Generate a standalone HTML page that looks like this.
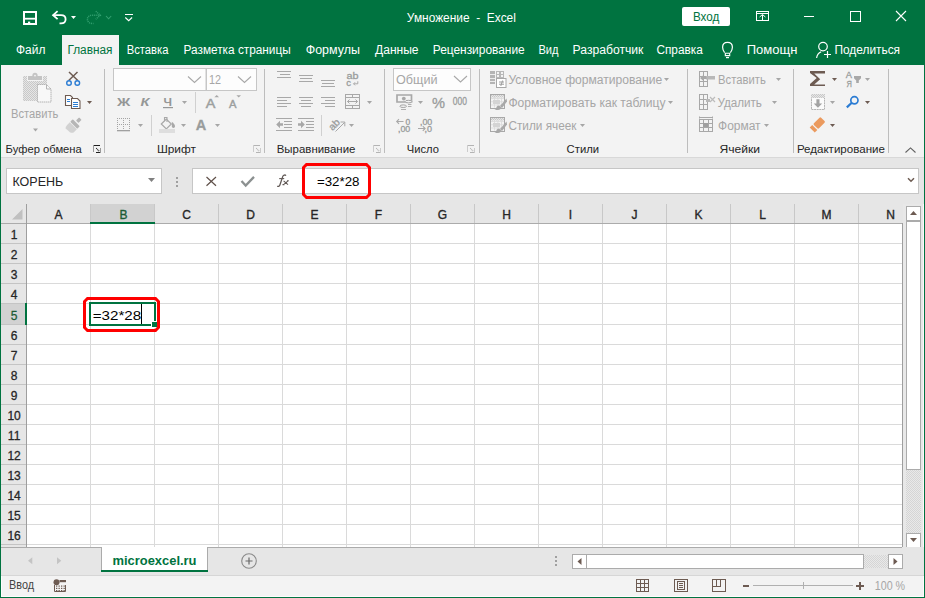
<!DOCTYPE html>
<html><head><meta charset="utf-8">
<style>html,body{margin:0;padding:0;width:925px;height:598px;overflow:hidden;background:#007340}svg{display:block}</style>
</head><body><svg width="925" height="598" viewBox="0 0 925 598" font-family="Liberation Sans, sans-serif"><rect x="0" y="0" width="925" height="598" fill="#007340" />
<path d="M24 12h12v12h-12z" fill="none" stroke="#fff" stroke-width="2" />
<rect x="25" y="17.8" width="10" height="1.8" fill="#fff" />
<rect x="28" y="21.6" width="2.2" height="2.6" fill="#fff" />
<path d="M52.8 15.2H61c2.8 0 4.6 1.8 4.6 4.1s-1.8 4.1-4.6 4.1h-1.5" fill="none" stroke="#fff" stroke-width="1.8" />
<path d="M57.6 11.2l-4.5 4l4.5 4" fill="none" stroke="#fff" stroke-width="1.8" />
<path d="M71 16h5l-2.5 3z" fill="#fff" />
<path d="M100.5 15.2H92c-2.8 0-4.6 1.8-4.6 4.1s1.8 4.1 4.6 4.1h1.5" fill="none" stroke="#33a070" stroke-width="1.5" stroke-dasharray="1 0.9"/>
<path d="M95.8 11.2l4.5 4l-4.5 4" fill="none" stroke="#33a070" stroke-width="1.5" stroke-dasharray="1 0.9"/>
<path d="M106 16l2.6 2.8l2.6-2.8" fill="none" stroke="#33a070" stroke-width="1.1" />
<rect x="125" y="14" width="8" height="1" fill="#fff" />
<path d="M125.3 17.5l3.4 3.2l3.4-3.2" fill="none" stroke="#fff" stroke-width="1.1" />
<text x="406.86" y="22" font-size="12" font-weight="400" fill="#fff" textLength="109.04" lengthAdjust="spacingAndGlyphs" xml:space="preserve">Умножение  -  Excel</text>
<rect x="682" y="7" width="48" height="19" rx="2" fill="#fff"/>
<text x="692.94" y="21" font-size="12" font-weight="400" fill="#007340" textLength="26.36" lengthAdjust="spacingAndGlyphs" xml:space="preserve">Вход</text>
<path d="M756.5 11.5h12v9h-12zM756.5 13.5h12" fill="none" stroke="#fff" stroke-width="1" shape-rendering="crispEdges"/>
<rect x="762" y="15" width="1" height="6" fill="#fff" />
<path d="M759.6 17l2.9-2.5l2.9 2.5" fill="none" stroke="#fff" stroke-width="1" />
<rect x="804" y="16" width="10" height="1" fill="#fff" />
<path d="M850.5 11.5h10v9.5h-10z" fill="none" stroke="#fff" stroke-width="1" shape-rendering="crispEdges"/>
<path d="M896 11L906 21M906 11L896 21" fill="none" stroke="#fff" stroke-width="1.1" />
<rect x="62" y="35" width="57" height="30" fill="#f3f3f3" />
<text x="16.04" y="54" font-size="12" font-weight="400" fill="#fff" textLength="29.32" lengthAdjust="spacingAndGlyphs" xml:space="preserve">Файл</text>
<text x="126.76" y="54" font-size="12" font-weight="400" fill="#fff" textLength="41.68" lengthAdjust="spacingAndGlyphs" xml:space="preserve">Вставка</text>
<text x="183.58" y="54" font-size="12" font-weight="400" fill="#fff" textLength="107.14" lengthAdjust="spacingAndGlyphs" xml:space="preserve">Разметка страницы</text>
<text x="305.72" y="54" font-size="12" font-weight="400" fill="#fff" textLength="54.18" lengthAdjust="spacingAndGlyphs" xml:space="preserve">Формулы</text>
<text x="375.04" y="54" font-size="12" font-weight="400" fill="#fff" textLength="43.54" lengthAdjust="spacingAndGlyphs" xml:space="preserve">Данные</text>
<text x="432.72" y="54" font-size="12" font-weight="400" fill="#fff" textLength="92.00" lengthAdjust="spacingAndGlyphs" xml:space="preserve">Рецензирование</text>
<text x="538.44" y="54" font-size="12" font-weight="400" fill="#fff" textLength="20.04" lengthAdjust="spacingAndGlyphs" xml:space="preserve">Вид</text>
<text x="572.58" y="54" font-size="12" font-weight="400" fill="#fff" textLength="70.82" lengthAdjust="spacingAndGlyphs" xml:space="preserve">Разработчик</text>
<text x="656.40" y="54" font-size="12" font-weight="400" fill="#fff" textLength="46.36" lengthAdjust="spacingAndGlyphs" xml:space="preserve">Справка</text>
<text x="746.72" y="54" font-size="12" font-weight="400" fill="#fff" textLength="50.64" lengthAdjust="spacingAndGlyphs" xml:space="preserve">Помощн</text>
<text x="834.44" y="54" font-size="12" font-weight="400" fill="#fff" textLength="65.60" lengthAdjust="spacingAndGlyphs" xml:space="preserve">Поделиться</text>
<text x="67.44" y="54" font-size="12" font-weight="400" fill="#007340" textLength="45.06" lengthAdjust="spacingAndGlyphs" xml:space="preserve">Главная</text>
<path d="M724.6 52.6C723.4 51 722.6 49.6 722.6 47.3C722.6 44.2 724.8 42.4 727.5 42.4C730.2 42.4 732.4 44.2 732.4 47.3C732.4 49.6 731.6 51 730.4 52.6" fill="none" stroke="#fff" stroke-width="1.2" />
<path d="M725.3 53.2h4.4v2.4h-4.4z" fill="none" stroke="#fff" stroke-width="1.1" />
<rect x="726" y="57" width="3" height="1.2" fill="#fff" />
<circle cx="823" cy="46.6" r="4.3" fill="none" stroke="#fff" stroke-width="1.2"/>
<path d="M816.6 58c0.4-3 2-5.2 4.6-6.3" fill="none" stroke="#fff" stroke-width="1.2" />
<path d="M824 54.5h7M827.5 51v7" fill="none" stroke="#fff" stroke-width="1.2" />
<rect x="1" y="65" width="923" height="92" fill="#f3f3f3" />
<rect x="1" y="157" width="923" height="1" fill="#d8d8d8" />
<rect x="104" y="69" width="1" height="84" fill="#bdbdbd" />
<rect x="264" y="69" width="1" height="84" fill="#bdbdbd" />
<rect x="384" y="69" width="1" height="84" fill="#bdbdbd" />
<rect x="479" y="69" width="1" height="84" fill="#bdbdbd" />
<rect x="687" y="69" width="1" height="84" fill="#bdbdbd" />
<rect x="793" y="69" width="1" height="84" fill="#bdbdbd" />
<rect x="888" y="69" width="1" height="84" fill="#bdbdbd" />
<rect x="93" y="145" width="7" height="1" fill="#202020" />
<rect x="93" y="145" width="1" height="7" fill="#9a9a9a" />
<path d="M96.2 148.2l3.3 3.3" fill="none" stroke="#202020" stroke-width="1.1" stroke-dasharray="1 0.6"/>
<rect x="96" y="152" width="4" height="1" fill="#202020" />
<rect x="100" y="148" width="1" height="5" fill="#9a9a9a" />
<rect x="253" y="145" width="7" height="1" fill="#b4b4b4" />
<rect x="253" y="145" width="1" height="7" fill="#cccccc" />
<path d="M256.2 148.2l3.3 3.3" fill="none" stroke="#b4b4b4" stroke-width="1.1" stroke-dasharray="1 0.6"/>
<rect x="256" y="152" width="4" height="1" fill="#b4b4b4" />
<rect x="260" y="148" width="1" height="5" fill="#cccccc" />
<rect x="373" y="145" width="7" height="1" fill="#b4b4b4" />
<rect x="373" y="145" width="1" height="7" fill="#cccccc" />
<path d="M376.2 148.2l3.3 3.3" fill="none" stroke="#b4b4b4" stroke-width="1.1" stroke-dasharray="1 0.6"/>
<rect x="376" y="152" width="4" height="1" fill="#b4b4b4" />
<rect x="380" y="148" width="1" height="5" fill="#cccccc" />
<rect x="467" y="145" width="7" height="1" fill="#b4b4b4" />
<rect x="467" y="145" width="1" height="7" fill="#cccccc" />
<path d="M470.2 148.2l3.3 3.3" fill="none" stroke="#b4b4b4" stroke-width="1.1" stroke-dasharray="1 0.6"/>
<rect x="470" y="152" width="4" height="1" fill="#b4b4b4" />
<rect x="474" y="148" width="1" height="5" fill="#cccccc" />
<text x="5.62" y="153" font-size="11" font-weight="400" fill="#262626" textLength="76.18" lengthAdjust="spacingAndGlyphs" xml:space="preserve">Буфер обмена</text>
<text x="156.90" y="153" font-size="11" font-weight="400" fill="#262626" textLength="39.04" lengthAdjust="spacingAndGlyphs" xml:space="preserve">Шрифт</text>
<text x="276.76" y="153" font-size="11" font-weight="400" fill="#262626" textLength="78.68" lengthAdjust="spacingAndGlyphs" xml:space="preserve">Выравнивание</text>
<text x="406.76" y="153" font-size="11" font-weight="400" fill="#262626" textLength="32.14" lengthAdjust="spacingAndGlyphs" xml:space="preserve">Число</text>
<text x="566.58" y="153" font-size="11" font-weight="400" fill="#262626" textLength="32.50" lengthAdjust="spacingAndGlyphs" xml:space="preserve">Стили</text>
<text x="719.40" y="153" font-size="11" font-weight="400" fill="#262626" textLength="40.64" lengthAdjust="spacingAndGlyphs" xml:space="preserve">Ячейки</text>
<text x="796.90" y="153" font-size="11" font-weight="400" fill="#262626" textLength="88.00" lengthAdjust="spacingAndGlyphs" xml:space="preserve">Редактирование</text>
<path d="M905.5 152.5l5-4.6l5 4.6" fill="none" stroke="#606060" stroke-width="1.1" />
<defs><pattern id="dith" width="2" height="2" patternUnits="userSpaceOnUse"><rect width="2" height="2" fill="#e6e6e6"/><rect width="1" height="1" fill="#c8c8c8"/><rect x="1" y="1" width="1" height="1" fill="#c8c8c8"/></pattern><pattern id="track" width="2" height="2" patternUnits="userSpaceOnUse"><rect width="2" height="2" fill="#e9e9e9"/><rect width="1" height="1" fill="#d5d5d5"/><rect x="1" y="1" width="1" height="1" fill="#d5d5d5"/></pattern></defs>
<rect x="23" y="76" width="24" height="25" fill="url(#dith)" />
<rect x="27" y="76" width="16" height="5" fill="#f3f3f3" />
<rect x="28" y="76" width="14" height="4" fill="#c4c4c4" />
<circle cx="35" cy="75.3" r="2.6" fill="#c4c4c4"/><circle cx="35" cy="75.6" r="0.9" fill="#f6f6f6"/>
<path d="M37.5 84.5h9l4.5 4.5v13h-13.5z" fill="#f8f8f8" stroke="#b4b4b4" stroke-width="1" stroke-dasharray="1.5 0.5"/>
<path d="M46.5 84.5v4.5h4.5" fill="none" stroke="#b4b4b4" stroke-width="1" />
<text x="11.08" y="118" font-size="12" font-weight="400" fill="#a6a6a6" textLength="47.32" lengthAdjust="spacingAndGlyphs" xml:space="preserve">Вставить</text>
<path d="M33 128.5h5l-2.5 3z" fill="#a6a6a6" />
<path d="M69 72l8.8 8.5M77.5 72l-8.8 8.5" fill="none" stroke="#6d5b52" stroke-width="1.5" />
<circle cx="69" cy="83" r="2.3" fill="none" stroke="#2b7cd3" stroke-width="1.4"/>
<circle cx="77.3" cy="83" r="2.3" fill="none" stroke="#2b7cd3" stroke-width="1.4"/>
<path d="M65.5 95.5h5l2 2v8h-7z" fill="#fff" stroke="#6d5b52" stroke-width="1.1"/>
<path d="M71.5 98.5h6l2.5 2.5v7.5h-8.5z" fill="#fff" stroke="#6d5b52" stroke-width="1.1"/>
<path d="M67 99.5h3M67 101.5h3M73 102.5h5M73 104.5h5M73 106.5h5" fill="none" stroke="#2b7cd3" stroke-width="1" />
<path d="M87 101h5l-2.5 3z" fill="#6d5b52" />
<g transform="translate(75,124) rotate(45)"><rect x="-5" y="-1.8" width="10" height="3.6" rx="0.8" fill="#b6b6b6"/><rect x="-1.7" y="-7.6" width="3.4" height="4.4" rx="0.6" fill="#b6b6b6"/><path d="M-5 2.4H5V6.2C5 8 3.6 8.8 2.2 9.4L-3.8 9.8C-5 7.5-5 5.2-5 2.4Z" fill="#d2d2d2"/></g>
<rect x="113.5" y="68.5" width="92.5" height="22" fill="#fdfdfd" stroke="#c6c6c6" stroke-width="1"/>
<rect x="206.5" y="68.5" width="50" height="22" fill="#fdfdfd" stroke="#c6c6c6" stroke-width="1"/>
<path d="M188 76.5l6.5 6l6.5-6" fill="none" stroke="#a8a8a8" stroke-width="1.1" />
<path d="M238 76.5l6.5 6l6.5-6" fill="none" stroke="#a8a8a8" stroke-width="1.1" />
<text x="208.94" y="84" font-size="12" font-weight="400" fill="#a6a6a6" textLength="12.00" lengthAdjust="spacingAndGlyphs" xml:space="preserve">12</text>
<text x="117" y="106" font-size="11.5" font-weight="700" fill="#959797" textLength="13.3" lengthAdjust="spacingAndGlyphs">Ж</text>
<text x="140.5" y="106" font-size="11.5" font-weight="700" font-style="italic" fill="#959797" textLength="9" lengthAdjust="spacingAndGlyphs">К</text>
<text x="163.5" y="106" font-size="11.5" font-weight="700" fill="#959797" textLength="8.5" lengthAdjust="spacingAndGlyphs">Ч</text>
<rect x="163" y="107" width="10" height="1.2" fill="#959797" />
<path d="M182 101h5l-2.5 3z" fill="#a6a6a6" />
<rect x="195" y="92" width="1" height="21" fill="#d0d0d0" />
<text x="205.8" y="107.8" font-size="13.2" fill="#9c9f9f" stroke="#9c9f9f" stroke-width="0.5" textLength="9.6" lengthAdjust="spacingAndGlyphs">A</text>
<path d="M214.4 97.3l2.3-2.3l2.3 2.3z" fill="#a8a8a8" />
<text x="229" y="107.8" font-size="10.5" fill="#9c9f9f" stroke="#9c9f9f" stroke-width="0.4" textLength="7.5" lengthAdjust="spacingAndGlyphs">A</text>
<path d="M236.4 95.3h4.6l-2.3 2.3z" fill="#a8a8a8" />
<rect x="117" y="118" width="1" height="1" fill="#a4a4a4" />
<rect x="117" y="124" width="1" height="1" fill="#a4a4a4" />
<rect x="119" y="118" width="1" height="1" fill="#a4a4a4" />
<rect x="119" y="124" width="1" height="1" fill="#a4a4a4" />
<rect x="121" y="118" width="1" height="1" fill="#a4a4a4" />
<rect x="121" y="124" width="1" height="1" fill="#a4a4a4" />
<rect x="123" y="118" width="1" height="1" fill="#a4a4a4" />
<rect x="123" y="124" width="1" height="1" fill="#a4a4a4" />
<rect x="125" y="118" width="1" height="1" fill="#a4a4a4" />
<rect x="125" y="124" width="1" height="1" fill="#a4a4a4" />
<rect x="127" y="118" width="1" height="1" fill="#a4a4a4" />
<rect x="127" y="124" width="1" height="1" fill="#a4a4a4" />
<rect x="129" y="118" width="1" height="1" fill="#a4a4a4" />
<rect x="129" y="124" width="1" height="1" fill="#a4a4a4" />
<rect x="117" y="120" width="1" height="1" fill="#a4a4a4" />
<rect x="123" y="120" width="1" height="1" fill="#a4a4a4" />
<rect x="129" y="120" width="1" height="1" fill="#a4a4a4" />
<rect x="117" y="122" width="1" height="1" fill="#a4a4a4" />
<rect x="123" y="122" width="1" height="1" fill="#a4a4a4" />
<rect x="129" y="122" width="1" height="1" fill="#a4a4a4" />
<rect x="117" y="126" width="1" height="1" fill="#a4a4a4" />
<rect x="123" y="126" width="1" height="1" fill="#a4a4a4" />
<rect x="129" y="126" width="1" height="1" fill="#a4a4a4" />
<rect x="117" y="128" width="1" height="1" fill="#a4a4a4" />
<rect x="123" y="128" width="1" height="1" fill="#a4a4a4" />
<rect x="129" y="128" width="1" height="1" fill="#a4a4a4" />
<rect x="117" y="130" width="13" height="1.3" fill="#a0a0a0" />
<path d="M138 124h5l-2.5 3z" fill="#a6a6a6" />
<rect x="151" y="115" width="1" height="21" fill="#d0d0d0" />
<path d="M161.3 124l5-5l5 5l-5 5z" fill="none" stroke="#a8a8a8" stroke-width="1.2" />
<path d="M164.5 121.3v-3.8h2.5v4.5" fill="none" stroke="#a8a8a8" stroke-width="1.1" />
<path d="M171.8 121.8c1.8 1.4 3.2 2.8 3.2 4.4c0 1.1-.8 1.7-1.6 1.7s-1.6-.6-1.6-1.7z" fill="#a8a8a8" />
<rect x="159" y="129" width="16" height="4" fill="#dedede" />
<path d="M181 124h5l-2.5 3z" fill="#a6a6a6" />
<text x="195.8" y="129.8" font-size="14.5" font-weight="700" fill="#999c9c" stroke="#999c9c" stroke-width="0.3" textLength="10.5" lengthAdjust="spacingAndGlyphs">A</text>
<path d="M215 124h5l-2.5 3z" fill="#a6a6a6" />
<rect x="277" y="71" width="14" height="1" fill="#a8a8a8" />
<rect x="280" y="74" width="10" height="1" fill="#a8a8a8" />
<rect x="277" y="77" width="14" height="1" fill="#a8a8a8" />
<rect x="299" y="75" width="14" height="1" fill="#a8a8a8" />
<rect x="300" y="78" width="12" height="1" fill="#a8a8a8" />
<rect x="299" y="81" width="14" height="1" fill="#a8a8a8" />
<rect x="321" y="80" width="14" height="1" fill="#a8a8a8" />
<rect x="322" y="83" width="12" height="1" fill="#a8a8a8" />
<rect x="321" y="86" width="14" height="1" fill="#a8a8a8" />
<text x="346.5" y="78.5" font-size="9.5" fill="#999c9c" stroke="#999c9c" stroke-width="0.3" textLength="12" lengthAdjust="spacingAndGlyphs">ab</text>
<text x="346.3" y="86.3" font-size="9.5" fill="#999c9c" stroke="#999c9c" stroke-width="0.3">c</text>
<path d="M357.8 81.3v2.5h-4M355 82.3l-1.5 1.5l1.5 1.5" fill="none" stroke="#a8a8a8" stroke-width="1" />
<rect x="277" y="97" width="14" height="1" fill="#a8a8a8" />
<rect x="277" y="100" width="10" height="1" fill="#a8a8a8" />
<rect x="277" y="103" width="14" height="1" fill="#a8a8a8" />
<rect x="277" y="106" width="10" height="1" fill="#a8a8a8" />
<rect x="299" y="97" width="14" height="1" fill="#a8a8a8" />
<rect x="301" y="100" width="10" height="1" fill="#a8a8a8" />
<rect x="299" y="103" width="14" height="1" fill="#a8a8a8" />
<rect x="301" y="106" width="10" height="1" fill="#a8a8a8" />
<rect x="321" y="97" width="14" height="1" fill="#a8a8a8" />
<rect x="325" y="100" width="10" height="1" fill="#a8a8a8" />
<rect x="321" y="103" width="14" height="1" fill="#a8a8a8" />
<rect x="325" y="106" width="10" height="1" fill="#a8a8a8" />
<path d="M345.5 94.5h14v14h-14zM345.5 97.5h14M345.5 105.5h14M352.5 94.5v3M352.5 105.5v3" fill="none" stroke="#a8a8a8" stroke-width="1" shape-rendering="crispEdges"/>
<path d="M347.5 101.5h10M349.5 99.5l-2 2l2 2M355.5 99.5l2 2l-2 2" fill="none" stroke="#a8a8a8" stroke-width="1" />
<path d="M367 101h5l-2.5 3z" fill="#a6a6a6" />
<rect x="276" y="118" width="16" height="1" fill="#a8a8a8" />
<rect x="284" y="121" width="8" height="1" fill="#a8a8a8" />
<rect x="284" y="124" width="8" height="1" fill="#a8a8a8" />
<rect x="284" y="127" width="8" height="1" fill="#a8a8a8" />
<rect x="276" y="130" width="16" height="1" fill="#a8a8a8" />
<path d="M276.2 124.5l3.8-3.8v2.6h3v2.4h-3v2.6z" fill="#a8a8a8" />
<rect x="298" y="118" width="16" height="1" fill="#a8a8a8" />
<rect x="306" y="121" width="8" height="1" fill="#a8a8a8" />
<rect x="306" y="124" width="8" height="1" fill="#a8a8a8" />
<rect x="306" y="127" width="8" height="1" fill="#a8a8a8" />
<rect x="298" y="130" width="16" height="1" fill="#a8a8a8" />
<path d="M304.8 124.5l-3.8-3.8v2.6h-3v2.4h3v2.6z" fill="#a8a8a8" />
<rect x="321" y="115" width="1" height="21" fill="#d0d0d0" />
<text x="0" y="0" font-size="10" fill="#999c9c" stroke="#999c9c" stroke-width="0.3" transform="translate(332.5,131) rotate(-45)" textLength="11.5" lengthAdjust="spacingAndGlyphs">ab</text>
<path d="M335.5 131.5l9-9M340.5 122h4.3v4.3" fill="none" stroke="#a8a8a8" stroke-width="1" />
<path d="M349 124h5l-2.5 3z" fill="#a6a6a6" />
<rect x="393.5" y="68.5" width="77" height="22" fill="#fdfdfd" stroke="#c6c6c6" stroke-width="1"/>
<text x="396.04" y="84" font-size="12" font-weight="400" fill="#a6a6a6" textLength="41.50" lengthAdjust="spacingAndGlyphs" xml:space="preserve">Общий</text>
<path d="M454 76l6.5 6l6.5-6" fill="none" stroke="#a8a8a8" stroke-width="1.1" />
<path d="M397 95h14.5v7H397z" fill="none" stroke="#a8a8a8" stroke-width="1.7" />
<circle cx="403.8" cy="98.6" r="1.9" fill="#a8a8a8"/>
<ellipse cx="408.5" cy="101.6" rx="3.3" ry="1.3" fill="#f3f3f3" stroke="#a4a4a4" stroke-width="1"/>
<rect x="408" y="104" width="3.5" height="1" fill="#b0b0b0" />
<rect x="408" y="106" width="3.5" height="1" fill="#b0b0b0" />
<ellipse cx="403.2" cy="106.2" rx="3.3" ry="1.3" fill="#f3f3f3" stroke="#a4a4a4" stroke-width="1"/>
<rect x="401" y="109" width="5" height="1" fill="#b0b0b0" />
<path d="M418 101h5l-2.5 3z" fill="#a6a6a6" />
<text x="432" y="108" font-size="14" fill="#999c9c" stroke="#999c9c" stroke-width="0.3" textLength="13" lengthAdjust="spacingAndGlyphs">%</text>
<text x="452.8" y="104.8" font-size="10.2" fill="#999c9c" stroke="#999c9c" stroke-width="0.3" textLength="14.2" lengthAdjust="spacingAndGlyphs">000</text>
<text x="405.5" y="124.5" font-size="8.5" fill="#999c9c" stroke="#999c9c" stroke-width="0.3">0</text>
<text x="398" y="131.5" font-size="8.5" fill="#999c9c" stroke="#999c9c" stroke-width="0.3" textLength="12.3" lengthAdjust="spacingAndGlyphs">,00</text>
<path d="M396.5 121.5h7M399 119.2l-2.3 2.3l2.3 2.3" fill="none" stroke="#a8a8a8" stroke-width="1.1" />
<text x="420" y="124.5" font-size="8.5" fill="#999c9c" stroke="#999c9c" stroke-width="0.3" textLength="12.3" lengthAdjust="spacingAndGlyphs">,00</text>
<text x="424.5" y="131.5" font-size="8.5" fill="#999c9c" stroke="#999c9c" stroke-width="0.3" textLength="7.5" lengthAdjust="spacingAndGlyphs">,0</text>
<path d="M418 128.5h7M422.8 126.2l2.3 2.3l-2.3 2.3" fill="none" stroke="#a8a8a8" stroke-width="1.1" />
<rect x="490" y="71" width="5" height="13" fill="#b4b4b4" />
<rect x="490" y="74" width="5" height="0.9" fill="#f3f3f3" />
<rect x="490" y="78" width="5" height="0.9" fill="#f3f3f3" />
<rect x="490" y="81" width="5" height="0.9" fill="#f3f3f3" />
<path d="M496.5 71.5h3v3h-3zM500.5 71.5h3v3h-3zM496.5 74.5h3v3h-3zM500.5 74.5h3v3h-3z" fill="none" stroke="#b8b8b8" stroke-width="1" shape-rendering="crispEdges"/>
<rect x="496.5" y="78.5" width="9.5" height="9" fill="#fff" stroke="#a8a8a8" stroke-width="1"/>
<path d="M499 82h5M499 84.2h5M502.6 80.5l-1.8 5.5" fill="none" stroke="#9c9c9c" stroke-width="1" />
<path d="M490.5 94.5h14v13.5h-14z" fill="none" stroke="#a8a8a8" stroke-width="1" shape-rendering="crispEdges"/>
<rect x="491" y="95" width="13" height="2.5" fill="url(#dith)" />
<rect x="491" y="98.2" width="13" height="0.8" fill="#dadada" />
<rect x="491" y="101.4" width="13" height="0.8" fill="#dadada" />
<rect x="491" y="104.6" width="13" height="0.8" fill="#dadada" />
<rect x="494.0" y="97" width="0.8" height="10.5" fill="#dadada" />
<rect x="497.5" y="97" width="0.8" height="10.5" fill="#dadada" />
<rect x="501.0" y="97" width="0.8" height="10.5" fill="#dadada" />
<rect x="493" y="100" width="7" height="4" fill="#d4d4d4" />
<path d="M506.5 98.5l-6.5 7.5l2 2l5-6.5z" fill="#a8a8a8" />
<path d="M499.2 105.6c-1.7 0-2.8 1.2-3 2.6c-.2 1-1 1.6-1.9 1.8h3.8c1.7 0 3-1.2 3.1-2.4z" fill="#a8a8a8" />
<path d="M490.5 117.5h14v13.5h-14z" fill="none" stroke="#a8a8a8" stroke-width="1" shape-rendering="crispEdges"/>
<rect x="491" y="118" width="13" height="2.5" fill="url(#dith)" />
<rect x="491" y="121.2" width="13" height="0.8" fill="#dadada" />
<rect x="491" y="124.4" width="13" height="0.8" fill="#dadada" />
<rect x="491" y="127.6" width="13" height="0.8" fill="#dadada" />
<rect x="494.0" y="120" width="0.8" height="10.5" fill="#dadada" />
<rect x="497.5" y="120" width="0.8" height="10.5" fill="#dadada" />
<rect x="501.0" y="120" width="0.8" height="10.5" fill="#dadada" />
<rect x="493" y="123" width="7" height="4" fill="#d4d4d4" />
<path d="M506.5 121.5l-6.5 7.5l2 2l5-6.5z" fill="#a8a8a8" />
<path d="M499.2 128.6c-1.7 0-2.8 1.2-3 2.6c-.2 1-1 1.6-1.9 1.8h3.8c1.7 0 3-1.2 3.1-2.4z" fill="#a8a8a8" />
<text x="508.40" y="84" font-size="12" font-weight="400" fill="#a6a6a6" textLength="153.82" lengthAdjust="spacingAndGlyphs" xml:space="preserve">Условное форматирование</text>
<text x="508.40" y="107" font-size="12" font-weight="400" fill="#a6a6a6" textLength="157.18" lengthAdjust="spacingAndGlyphs" xml:space="preserve">Форматировать как таблицу</text>
<text x="508.40" y="130" font-size="12" font-weight="400" fill="#a6a6a6" textLength="68.08" lengthAdjust="spacingAndGlyphs" xml:space="preserve">Стили ячеек</text>
<path d="M664 78h5l-2.5 3z" fill="#a6a6a6" />
<path d="M668 101h5l-2.5 3z" fill="#a6a6a6" />
<path d="M580 124h5l-2.5 3z" fill="#a6a6a6" />
<path d="M699.5 71.5h8v15h-8zM699.5 76.5h8M699.5 81.5h8M703.5 71.5v15" fill="none" stroke="#a8a8a8" stroke-width="1" shape-rendering="crispEdges"/>
<rect x="706" y="76" width="9" height="3.5" fill="#b8b8b8" />
<path d="M700 78l3.5-3v2h3v2h-3v2z" fill="#a8a8a8" />
<path d="M699.5 94.5h8v15h-8zM699.5 99.5h8M699.5 104.5h8M703.5 94.5v15" fill="none" stroke="#a8a8a8" stroke-width="1" shape-rendering="crispEdges"/>
<rect x="706" y="99" width="4" height="3" fill="#b8b8b8" />
<path d="M710 97l5 5M715 97l-5 5" fill="none" stroke="#bcbcbc" stroke-width="1.2" />
<path d="M699.5 119.5h13v12h-13zM699.5 123.5h13M699.5 127.5h13M703.5 119.5v12M708.5 119.5v12" fill="none" stroke="#a8a8a8" stroke-width="1" shape-rendering="crispEdges"/>
<rect x="703" y="123" width="5" height="4" fill="#a0a0a0" />
<path d="M699.5 116.5v2M712.5 116.5v2M700 117.5h12" fill="none" stroke="#a8a8a8" stroke-width="1" />
<text x="718.08" y="84" font-size="12" font-weight="400" fill="#a6a6a6" textLength="47.68" lengthAdjust="spacingAndGlyphs" xml:space="preserve">Вставить</text>
<text x="717.40" y="107" font-size="12" font-weight="400" fill="#a6a6a6" textLength="44.54" lengthAdjust="spacingAndGlyphs" xml:space="preserve">Удалить</text>
<text x="718.08" y="130" font-size="12" font-weight="400" fill="#a6a6a6" textLength="42.54" lengthAdjust="spacingAndGlyphs" xml:space="preserve">Формат</text>
<path d="M776 78h5l-2.5 3z" fill="#a6a6a6" />
<path d="M772 101h5l-2.5 3z" fill="#a6a6a6" />
<path d="M764 124h5l-2.5 3z" fill="#a6a6a6" />
<path d="M810 71h15v2.6h-10.8l6 5.6l-6 5.4h10.8V86H810v-2l6.7-5.9L810 73z" fill="#6d5b52" />
<path d="M832 78h5l-2.5 3z" fill="#6d5b52" />
<text x="845.8" y="77.9" font-size="9.8" fill="#999c9c" stroke="#999c9c" stroke-width="0.3" textLength="6.2" lengthAdjust="spacingAndGlyphs">A</text>
<text x="846.6" y="86.9" font-size="9.8" fill="#999c9c" stroke="#999c9c" stroke-width="0.3" textLength="5.4" lengthAdjust="spacingAndGlyphs">Я</text>
<path d="M854 76h7v2.3l-2.2 2.2v2.5h-2.6v-2.5l-2.2-2.2z" fill="#a8a8a8" />
<path d="M865 78h5l-2.5 3z" fill="#a6a6a6" />
<rect x="811.5" y="94.5" width="13" height="15" fill="#fbfbfb" stroke="#b4b4b4" stroke-width="1" stroke-dasharray="2 0.6"/>
<rect x="811" y="94" width="14" height="4" fill="url(#dith)" />
<path d="M816.4 99.2h3.1v4.3h2.7l-4.25 4.2l-4.25-4.2h2.7z" fill="#a3a3a3" />
<path d="M830 101h5l-2.5 3z" fill="#a6a6a6" />
<circle cx="854.4" cy="100.3" r="3.6" fill="none" stroke="#2b7cd3" stroke-width="1.7"/>
<path d="M846.8 107.4l5-4.6" fill="none" stroke="#2b7cd3" stroke-width="2.2" />
<path d="M865 101h5l-2.5 3z" fill="#6d5b52" />
<g transform="translate(817.6,124.6) rotate(-45)"><rect x="-2.8" y="-3.6" width="10.2" height="7.2" rx="1.2" fill="#eb9a5e"/><rect x="-7.6" y="-3.6" width="3.6" height="7.2" fill="#eb9a5e"/></g>
<path d="M830 124h5l-2.5 3z" fill="#6d5b52" />
<rect x="1" y="158" width="923" height="66" fill="#e6e6e6" />
<rect x="6.5" y="168.5" width="155" height="25" fill="#fff" stroke="#c6c6c6" stroke-width="1"/>
<text x="12.44" y="186" font-size="12" font-weight="400" fill="#262626" textLength="50.78" lengthAdjust="spacingAndGlyphs" xml:space="preserve">КОРЕНЬ</text>
<path d="M148 178h7l-3.5 4z" fill="#808080" />
<rect x="176" y="177" width="2" height="2" fill="#a0a0a0" />
<rect x="176" y="181" width="2" height="2" fill="#a0a0a0" />
<rect x="176" y="185" width="2" height="2" fill="#a0a0a0" />
<rect x="192.5" y="168.5" width="726" height="25" fill="#fff" stroke="#c6c6c6" stroke-width="1"/>
<path d="M206.5 177l9.5 8.7M216 177l-9.5 8.7" fill="none" stroke="#5f5049" stroke-width="1.2" />
<path d="M241.5 181l4.2 4.5l8.3-8.6" fill="none" stroke="#8c9191" stroke-width="2.3" />
<path d="M286 175.6c-.8-.9-2.6-.9-3.2.8l-2.9 8.6c-.5 1.4-1.7 1.7-2.6 1" fill="none" stroke="#625a57" stroke-width="1.3" />
<path d="M279.2 178.6h5" fill="none" stroke="#625a57" stroke-width="1.1" />
<path d="M283.6 180.8l4.4 3.8M288 180.8l-4.4 3.8M282.5 184.6h2M287 180.7h1.8" fill="none" stroke="#625a57" stroke-width="1.1" />
<text x="316.90" y="186" font-size="13" font-weight="400" fill="#000" textLength="42.64" lengthAdjust="spacingAndGlyphs" xml:space="preserve">=32*28</text>
<path d="M908 178.3l3 3l3-3" fill="none" stroke="#6d5b52" stroke-width="1.5" />
<rect x="1" y="224" width="26" height="323" fill="#e6e6e6" />
<rect x="27" y="224" width="875" height="323" fill="#fff" />
<rect x="90" y="204" width="64" height="18" fill="#d2d2d2" />
<rect x="1" y="304" width="24" height="20" fill="#d2d2d2" />
<rect x="90" y="224" width="1" height="323" fill="#dadada" />
<rect x="90" y="204" width="1" height="19" fill="#c8c8c8" />
<rect x="154" y="224" width="1" height="323" fill="#dadada" />
<rect x="154" y="204" width="1" height="19" fill="#c8c8c8" />
<rect x="218" y="224" width="1" height="323" fill="#dadada" />
<rect x="218" y="204" width="1" height="19" fill="#c8c8c8" />
<rect x="282" y="224" width="1" height="323" fill="#dadada" />
<rect x="282" y="204" width="1" height="19" fill="#c8c8c8" />
<rect x="346" y="224" width="1" height="323" fill="#dadada" />
<rect x="346" y="204" width="1" height="19" fill="#c8c8c8" />
<rect x="410" y="224" width="1" height="323" fill="#dadada" />
<rect x="410" y="204" width="1" height="19" fill="#c8c8c8" />
<rect x="474" y="224" width="1" height="323" fill="#dadada" />
<rect x="474" y="204" width="1" height="19" fill="#c8c8c8" />
<rect x="538" y="224" width="1" height="323" fill="#dadada" />
<rect x="538" y="204" width="1" height="19" fill="#c8c8c8" />
<rect x="602" y="224" width="1" height="323" fill="#dadada" />
<rect x="602" y="204" width="1" height="19" fill="#c8c8c8" />
<rect x="666" y="224" width="1" height="323" fill="#dadada" />
<rect x="666" y="204" width="1" height="19" fill="#c8c8c8" />
<rect x="730" y="224" width="1" height="323" fill="#dadada" />
<rect x="730" y="204" width="1" height="19" fill="#c8c8c8" />
<rect x="794" y="224" width="1" height="323" fill="#dadada" />
<rect x="794" y="204" width="1" height="19" fill="#c8c8c8" />
<rect x="858" y="224" width="1" height="323" fill="#dadada" />
<rect x="858" y="204" width="1" height="19" fill="#c8c8c8" />
<rect x="27" y="243" width="875" height="1" fill="#dadada" />
<rect x="1" y="243" width="25" height="1" fill="#c4c4c4" />
<rect x="27" y="263" width="875" height="1" fill="#dadada" />
<rect x="1" y="263" width="25" height="1" fill="#c4c4c4" />
<rect x="27" y="283" width="875" height="1" fill="#dadada" />
<rect x="1" y="283" width="25" height="1" fill="#c4c4c4" />
<rect x="27" y="303" width="875" height="1" fill="#dadada" />
<rect x="1" y="303" width="25" height="1" fill="#c4c4c4" />
<rect x="27" y="324" width="875" height="1" fill="#dadada" />
<rect x="1" y="324" width="25" height="1" fill="#c4c4c4" />
<rect x="27" y="344" width="875" height="1" fill="#dadada" />
<rect x="1" y="344" width="25" height="1" fill="#c4c4c4" />
<rect x="27" y="364" width="875" height="1" fill="#dadada" />
<rect x="1" y="364" width="25" height="1" fill="#c4c4c4" />
<rect x="27" y="384" width="875" height="1" fill="#dadada" />
<rect x="1" y="384" width="25" height="1" fill="#c4c4c4" />
<rect x="27" y="404" width="875" height="1" fill="#dadada" />
<rect x="1" y="404" width="25" height="1" fill="#c4c4c4" />
<rect x="27" y="424" width="875" height="1" fill="#dadada" />
<rect x="1" y="424" width="25" height="1" fill="#c4c4c4" />
<rect x="27" y="444" width="875" height="1" fill="#dadada" />
<rect x="1" y="444" width="25" height="1" fill="#c4c4c4" />
<rect x="27" y="464" width="875" height="1" fill="#dadada" />
<rect x="1" y="464" width="25" height="1" fill="#c4c4c4" />
<rect x="27" y="484" width="875" height="1" fill="#dadada" />
<rect x="1" y="484" width="25" height="1" fill="#c4c4c4" />
<rect x="27" y="504" width="875" height="1" fill="#dadada" />
<rect x="1" y="504" width="25" height="1" fill="#c4c4c4" />
<rect x="27" y="524" width="875" height="1" fill="#dadada" />
<rect x="1" y="524" width="25" height="1" fill="#c4c4c4" />
<rect x="27" y="544" width="875" height="1" fill="#dadada" />
<rect x="1" y="544" width="25" height="1" fill="#c4c4c4" />
<rect x="1" y="223" width="902" height="1" fill="#ababab" />
<rect x="26" y="204" width="1" height="343" fill="#9e9e9e" />
<rect x="902" y="223" width="1" height="324" fill="#9e9e9e" />
<rect x="90" y="222" width="65" height="2" fill="#007340" />
<rect x="25" y="303" width="2" height="22" fill="#007340" />
<path d="M12 219.5h10.5v-10.5z" fill="#c0c0c0" />
<text x="58.5" y="219" font-size="12" fill="#262626" stroke="#262626" stroke-width="0.35" text-anchor="middle">A</text>
<text x="123.5" y="219" font-size="12" fill="#1c5c36" stroke="#1c5c36" stroke-width="0.35" text-anchor="middle">B</text>
<text x="186.5" y="219" font-size="12" fill="#262626" stroke="#262626" stroke-width="0.35" text-anchor="middle">C</text>
<text x="250.5" y="219" font-size="12" fill="#262626" stroke="#262626" stroke-width="0.35" text-anchor="middle">D</text>
<text x="314.5" y="219" font-size="12" fill="#262626" stroke="#262626" stroke-width="0.35" text-anchor="middle">E</text>
<text x="378.5" y="219" font-size="12" fill="#262626" stroke="#262626" stroke-width="0.35" text-anchor="middle">F</text>
<text x="442.5" y="219" font-size="12" fill="#262626" stroke="#262626" stroke-width="0.35" text-anchor="middle">G</text>
<text x="506.5" y="219" font-size="12" fill="#262626" stroke="#262626" stroke-width="0.35" text-anchor="middle">H</text>
<text x="570.5" y="219" font-size="12" fill="#262626" stroke="#262626" stroke-width="0.35" text-anchor="middle">I</text>
<text x="634.5" y="219" font-size="12" fill="#262626" stroke="#262626" stroke-width="0.35" text-anchor="middle">J</text>
<text x="698.5" y="219" font-size="12" fill="#262626" stroke="#262626" stroke-width="0.35" text-anchor="middle">K</text>
<text x="762.5" y="219" font-size="12" fill="#262626" stroke="#262626" stroke-width="0.35" text-anchor="middle">L</text>
<text x="826.5" y="219" font-size="12" fill="#262626" stroke="#262626" stroke-width="0.35" text-anchor="middle">M</text>
<text x="890.5" y="219" font-size="12" fill="#262626" stroke="#262626" stroke-width="0.35" text-anchor="middle">N</text>
<text x="14.1" y="239" font-size="12" fill="#262626" stroke="#262626" stroke-width="0.3" text-anchor="middle">1</text>
<text x="14.1" y="259" font-size="12" fill="#262626" stroke="#262626" stroke-width="0.3" text-anchor="middle">2</text>
<text x="14.1" y="279" font-size="12" fill="#262626" stroke="#262626" stroke-width="0.3" text-anchor="middle">3</text>
<text x="14.1" y="299" font-size="12" fill="#262626" stroke="#262626" stroke-width="0.3" text-anchor="middle">4</text>
<text x="14.1" y="320" font-size="12" fill="#1c5c36" stroke="#1c5c36" stroke-width="0.3" text-anchor="middle">5</text>
<text x="14.1" y="340" font-size="12" fill="#262626" stroke="#262626" stroke-width="0.3" text-anchor="middle">6</text>
<text x="14.1" y="360" font-size="12" fill="#262626" stroke="#262626" stroke-width="0.3" text-anchor="middle">7</text>
<text x="14.1" y="380" font-size="12" fill="#262626" stroke="#262626" stroke-width="0.3" text-anchor="middle">8</text>
<text x="14.1" y="400" font-size="12" fill="#262626" stroke="#262626" stroke-width="0.3" text-anchor="middle">9</text>
<text x="14.1" y="420" font-size="12" fill="#262626" stroke="#262626" stroke-width="0.3" text-anchor="middle">10</text>
<text x="14.1" y="440" font-size="12" fill="#262626" stroke="#262626" stroke-width="0.3" text-anchor="middle">11</text>
<text x="14.1" y="460" font-size="12" fill="#262626" stroke="#262626" stroke-width="0.3" text-anchor="middle">12</text>
<text x="14.1" y="480" font-size="12" fill="#262626" stroke="#262626" stroke-width="0.3" text-anchor="middle">13</text>
<text x="14.1" y="500" font-size="12" fill="#262626" stroke="#262626" stroke-width="0.3" text-anchor="middle">14</text>
<text x="14.1" y="520" font-size="12" fill="#262626" stroke="#262626" stroke-width="0.3" text-anchor="middle">15</text>
<text x="14.1" y="540" font-size="12" fill="#262626" stroke="#262626" stroke-width="0.3" text-anchor="middle">16</text>
<path d="M90 303h65v22h-65z" fill="none" stroke="#007340" stroke-width="2" />
<rect x="151" y="321" width="7" height="7" fill="#fff" />
<rect x="152" y="322" width="5" height="5" fill="#007340" />
<text x="92.72" y="320" font-size="13" font-weight="400" fill="#000" textLength="48.46" lengthAdjust="spacingAndGlyphs" xml:space="preserve">=32*28</text>
<rect x="141" y="304" width="1" height="20" fill="#000" />
<path d="M87.5 298.5H155.5L158.5 301.5V327.5L155.5 330.5H87.5L84.5 327.5V301.5Z" fill="none" stroke="#ff0000" stroke-width="3"/>
<path d="M306.5 164.5H366.5L369.5 167.5V194.5L366.5 197.5H306.5L303.5 194.5V167.5Z" fill="none" stroke="#ff0000" stroke-width="3"/>
<rect x="903" y="204" width="21" height="343" fill="#e8e8e8" />
<rect x="923" y="204" width="1" height="393" fill="#fafafa" />
<rect x="906.5" y="206.5" width="14" height="14" fill="#fff" stroke="#ababab" stroke-width="1"/>
<path d="M910 215h7l-3.5-4z" fill="#6d5b52" />
<rect x="906.5" y="221.5" width="14" height="248" fill="#fff" stroke="#ababab" stroke-width="1"/>
<rect x="906" y="470" width="15" height="63" fill="url(#track)" />
<rect x="906.5" y="533.5" width="14" height="14" fill="#fff" stroke="#ababab" stroke-width="1"/>
<path d="M910 538h7l-3.5 4z" fill="#6d5b52" />
<rect x="1" y="547" width="923" height="28" fill="#e6e6e6" />
<rect x="1" y="547" width="101" height="1" fill="#ababab" />
<rect x="208" y="547" width="694" height="1" fill="#ababab" />
<rect x="101" y="547" width="1" height="25" fill="#ababab" />
<rect x="207" y="547" width="1" height="25" fill="#ababab" />
<rect x="102" y="547" width="105" height="23" fill="#fff" />
<rect x="101" y="570" width="107" height="2" fill="#007340" />
<text x="112.44" y="565.3" font-size="12.5" font-weight="700" fill="#007340" textLength="84.06" lengthAdjust="spacingAndGlyphs" xml:space="preserve">microexcel.ru</text>
<path d="M32.3 557.2v7.1l-4.3-3.55z" fill="#c4c4c4" />
<path d="M57 557.2v7.1l4.3-3.55z" fill="#c4c4c4" />
<circle cx="249" cy="561" r="7.3" fill="none" stroke="#8a8a8a" stroke-width="1.1"/>
<path d="M249 557.5v7M245.5 561h7" fill="none" stroke="#6a6a6a" stroke-width="1.2" />
<rect x="555" y="556" width="2" height="2" fill="#a0a0a0" />
<rect x="555" y="560" width="2" height="2" fill="#a0a0a0" />
<rect x="555" y="564" width="2" height="2" fill="#a0a0a0" />
<rect x="572.5" y="554.5" width="14" height="14" fill="#fff" stroke="#ababab" stroke-width="1"/>
<path d="M581.5 558v7l-4-3.5z" fill="#6d5b52" />
<rect x="586.5" y="554.5" width="277" height="14" fill="#fff" stroke="#ababab" stroke-width="1"/>
<rect x="864" y="555" width="24" height="13" fill="url(#track)" />
<rect x="888.5" y="554.5" width="14" height="14" fill="#fff" stroke="#ababab" stroke-width="1"/>
<path d="M893.5 558v7l4-3.5z" fill="#6d5b52" />
<rect x="1" y="575" width="923" height="22" fill="#f3f3f3" />
<rect x="1" y="575" width="923" height="1" fill="#d6d6d6" />
<rect x="1" y="596" width="923" height="1" fill="#fdfdfd" />
<rect x="1" y="576" width="1" height="21" fill="#fdfdfd" />
<rect x="923" y="576" width="1" height="21" fill="#fdfdfd" />
<text x="9.08" y="589" font-size="12" font-weight="400" fill="#444" textLength="25.04" lengthAdjust="spacingAndGlyphs" xml:space="preserve">Ввод</text>
<circle cx="56.5" cy="582.3" r="3" fill="#6d5b52"/>
<rect x="59.5" y="580" width="6.5" height="2.2" fill="#6d5b52" />
<path d="M54.5 585v6.5h11v-6.5" fill="none" stroke="#6d5b52" stroke-width="1" />
<rect x="56" y="585.5" width="1.3" height="1.2" fill="#6d5b52" />
<rect x="56" y="587.8" width="1.3" height="1.2" fill="#6d5b52" />
<rect x="56" y="590" width="1.3" height="1.2" fill="#6d5b52" />
<rect x="58.5" y="585.5" width="1.3" height="1.2" fill="#6d5b52" />
<rect x="58.5" y="587.8" width="1.3" height="1.2" fill="#6d5b52" />
<rect x="58.5" y="590" width="1.3" height="1.2" fill="#6d5b52" />
<rect x="61" y="585.5" width="1.3" height="1.2" fill="#6d5b52" />
<rect x="61" y="587.8" width="1.3" height="1.2" fill="#6d5b52" />
<rect x="61" y="590" width="1.3" height="1.2" fill="#6d5b52" />
<rect x="63.5" y="585.5" width="1.3" height="1.2" fill="#6d5b52" />
<rect x="63.5" y="587.8" width="1.3" height="1.2" fill="#6d5b52" />
<rect x="63.5" y="590" width="1.3" height="1.2" fill="#6d5b52" />
<text x="874.76" y="589.5" font-size="12" font-weight="400" fill="#a6a6a6" textLength="30.32" lengthAdjust="spacingAndGlyphs" xml:space="preserve">100 %</text>
<path d="M636.5 579.5h12v12h-12zM636.5 583.5h12M636.5 587.5h12M640.5 579.5v12M644.5 579.5v12" fill="none" stroke="#6d5b52" stroke-width="1" shape-rendering="crispEdges"/>
<path d="M674.5 579.5h13v12h-13zM677.5 581.5h7v8h-7z" fill="none" stroke="#6d5b52" stroke-width="1" shape-rendering="crispEdges"/>
<path d="M679 583.5h4M679 585.5h4M679 587.5h4" fill="none" stroke="#6d5b52" stroke-width="1" />
<path d="M712.5 579.5h13v12h-13zM712.5 586.5h8M716.5 579.5v7M720.5 579.5v7" fill="none" stroke="#6d5b52" stroke-width="1" shape-rendering="crispEdges"/>
<rect x="743" y="585" width="6" height="2" fill="#6d5b52" />
<rect x="753" y="585" width="100" height="1" fill="#b0b0b0" />
<rect x="803" y="582" width="1" height="7" fill="#b0b0b0" />
<rect x="856" y="585" width="8" height="2" fill="#6d5b52" />
<rect x="859" y="582" width="2" height="8" fill="#6d5b52" /></svg></body></html>
